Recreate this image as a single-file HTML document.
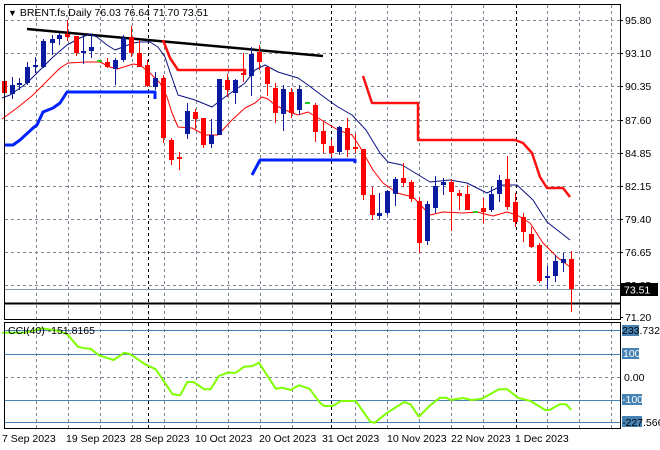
<!DOCTYPE html>
<html><head><meta charset="utf-8"><style>
body{margin:0;background:#fff;width:660px;height:450px;overflow:hidden;font-family:"Liberation Sans",sans-serif;}
svg{position:absolute;left:0;top:0}
text{font-family:"Liberation Sans",sans-serif;font-size:10.5px;fill:#000}
</style></head><body>
<svg id="s" width="660" height="450" viewBox="0 0 660 450">
<rect x="0" y="0" width="660" height="450" fill="#fff"/>
<g id="grid" stroke="#7a8591" stroke-width="1" stroke-dasharray="3,3" fill="none"></g>
<g id="lines" fill="none"></g>
<g id="candles"></g>
<rect x="4.5" y="4.5" width="616" height="315" fill="none" stroke="#000"/>
<rect x="4.5" y="322.5" width="616" height="106" fill="none" stroke="#000"/>
<text x="8" y="16"><tspan font-size="9">▼</tspan> BRENT.fs,Daily  76.03 76.64 71.70 73.51</text>
<g font-size="10.5">
<text x="625" y="24">95.80</text>
<text x="625" y="57">93.10</text>
<text x="625" y="90">90.35</text>
<text x="625" y="124">87.60</text>
<text x="625" y="157">84.85</text>
<text x="625" y="190">82.15</text>
<text x="625" y="223">79.40</text>
<text x="625" y="256">76.65</text>
<text x="625" y="289">73.85</text>
<text x="625" y="321">71.20</text>
</g>
<rect x="621" y="283" width="37" height="13" fill="#000"/>
<text x="624" y="293.5" style="fill:#fff">73.51</text>
<text x="8" y="334">CCI(40) -151.8165</text>
<rect x="622" y="325" width="17" height="11" fill="#4682b4"/>
<text x="622" y="334">233.7321</text>
<rect x="622" y="348" width="17" height="11" fill="#4682b4"/>
<text x="623" y="357" style="fill:#fff">100</text>
<text x="624" y="381">0.00</text>
<rect x="622" y="394" width="20" height="11" fill="#4682b4"/>
<text x="622" y="403" style="fill:#fff">-100</text>
<rect x="622" y="416" width="20" height="11" fill="#4682b4"/>
<text x="622" y="426">-227.566</text>
<g font-size="10.5">
<text x="2" y="442">7 Sep 2023</text>
<text x="66" y="442">19 Sep 2023</text>
<text x="130" y="442">28 Sep 2023</text>
<text x="195" y="442">10 Oct 2023</text>
<text x="259" y="442">20 Oct 2023</text>
<text x="322" y="442">31 Oct 2023</text>
<text x="387" y="442">10 Nov 2023</text>
<text x="451" y="442">22 Nov 2023</text>
<text x="515" y="442">1 Dec 2023</text>
</g>
</svg>
<script>
var NS="http://www.w3.org/2000/svg";
function el(p,t,a){var e=document.createElementNS(NS,t);for(var k in a)e.setAttribute(k,a[k]);p.appendChild(e);return e;}
var g=document.getElementById("grid");
[20,53,86,120,153,186,219,252,285].forEach(function(y){el(g,"line",{x1:5,x2:620,y1:y+.5,y2:y+.5});el(g,"line",{x1:620,x2:623,y1:y+.5,y2:y+.5,"stroke-dasharray":"none",stroke:"#000"});});
el(g,"line",{x1:620,x2:623,y1:317.5,y2:317.5,"stroke-dasharray":"none",stroke:"#000"});
el(g,"line",{x1:5,x2:620,y1:377.5,y2:377.5});
[36,68,100,132,164,196,228,260,292,355,387,419,451,483,547,579,611].forEach(function(x){el(g,"line",{x1:x+.5,x2:x+.5,y1:5,y2:319});el(g,"line",{x1:x+.5,x2:x+.5,y1:323,y2:428});});
[148,331,516].forEach(function(x){el(g,"line",{x1:x+.5,x2:x+.5,y1:5,y2:319,stroke:"#000"});el(g,"line",{x1:x+.5,x2:x+.5,y1:323,y2:428,stroke:"#000"});});
var L=document.getElementById("lines");
[330,354,400,422].forEach(function(y){el(L,"line",{x1:5,x2:620,y1:y+.5,y2:y+.5,stroke:"#4682b4"});});
el(L,"line",{x1:5,x2:620,y1:289.5,y2:289.5,stroke:"#8a98a8"});
el(L,"line",{x1:5,x2:620,y1:303.5,y2:303.5,stroke:"#000","stroke-width":2});
el(L,"line",{x1:27,x2:323,y1:29,y2:56,stroke:"#000","stroke-width":2.5});
function pl(pts,c,w){el(L,"polyline",{points:pts,stroke:c,"stroke-width":w,"stroke-linejoin":"round"});}
pl("2,98 10,95 27,83 43,67 53,57 67,45 80,38 90,34 97,37 107,45 115,50 123,47 133,43 140,42 150,42 158,47 165,57 170,72 178,95 195,100 212,107 225,97 245,83 255,70 265,65 278,72 298,78 308,85 328,100 338,107 352,115 366,130 380,153 388,162 402,165 430,182 450,180 467,183 487,193 503,185 517,185 533,200 547,222 570,240","#0a1080",1);
pl("2,119 17,108 33,95 50,78 60,68 68,63 87,62 100,62 110,67 117,69 127,66 133,64 140,65 150,73 160,83 167,97 172,113 178,127 192,128 205,135 218,135 232,120 245,108 255,103 262,97 268,99 275,105 285,110 298,115 308,112 318,118 328,124 338,130 352,135 360,147 373,170 383,183 397,193 413,197 430,215 443,212 463,213 477,212 493,216 507,212 517,215 530,223 543,243 557,257 570,267","#ff0000",1);
pl("4,145 13,145 20,140 33,128 37,125 43,112 53,108 60,103 67,92 155,92 155,99","#0022ff",3);
pl("252,175 260,160 355,160 355,163","#0022ff",3);
pl("163,40 170,58 178,70 245,70 245,75","#ff1010",2.5);
pl("363,76 372,103 418,103 418,140 515,140 523,143 532,153 540,177 547,188 563,188 570,197","#ff1010",2.5);
var C=[[4,81,93,78,96,'r'],[12,85,94,77,99,'b'],[19,83,84,78,90,'b'],[27,67,83,62,85,'b'],[35,65,67,57,73,'b'],[43,41,67,39,68,'b'],[52,39,43,35,55,'b'],[59,35,39,33,45,'b'],[67,34,37,20,41,'r'],[76,36,53,36,56,'r'],[83,51,53,35,64,'b'],[91,47,51,35,58,'b'],[99,60,61,60,61,'g'],[107,62,67,58,68,'r'],[115,60,69,58,85,'b'],[123,38,60,35,62,'b'],[131,37,53,26,57,'r'],[139,53,67,40,67,'r'],[147,65,86,60,87,'r'],[155,78,87,72,90,'b'],[163,78,138,75,143,'r'],[171,140,160,138,165,'r'],[179,157,158,152,170,'r'],[187,111,134,103,139,'b'],[195,112,119,109,129,'r'],[203,118,145,118,148,'r'],[211,135,144,119,148,'b'],[219,79,135,79,135,'b'],[227,80,90,74,97,'r'],[235,80,93,79,104,'b'],[243,73,75,53,82,'r'],[251,54,76,47,96,'b'],[259,52,62,45,70,'r'],[267,67,84,67,96,'r'],[275,88,113,83,123,'r'],[283,89,114,85,131,'b'],[291,92,113,88,118,'r'],[299,89,110,85,115,'b'],[307,102,103,102,103,'g'],[315,105,132,103,142,'r'],[323,131,144,122,153,'r'],[331,146,153,140,157,'r'],[339,127,152,126,155,'b'],[347,128,150,118,157,'r'],[355,147,149,134,153,'r'],[363,149,195,149,200,'r'],[372,195,215,187,220,'r'],[379,213,216,193,219,'b'],[387,191,213,190,215,'b'],[395,179,194,177,206,'b'],[403,178,183,163,187,'r'],[411,182,199,180,202,'r'],[419,201,243,197,253,'r'],[427,204,241,201,245,'b'],[435,186,208,176,213,'b'],[443,182,185,178,195,'b'],[451,182,192,179,231,'r'],[459,193,196,190,210,'r'],[467,194,210,185,210,'r'],[475,211,212,211,212,'g'],[483,208,212,198,223,'r'],[491,194,210,187,212,'b'],[499,180,194,175,202,'b'],[507,179,207,156,210,'r'],[515,202,222,193,227,'r'],[523,217,232,213,242,'r'],[531,234,247,227,248,'r'],[539,245,281,243,283,'r'],[547,276,278,266,289,'b'],[555,261,276,255,282,'b'],[563,259,263,253,272,'b'],[571,259,289,251,312,'r']];
var cg=document.getElementById("candles");
C.forEach(function(c){var col=c[5]=='r'?'#ff0000':(c[5]=='b'?'#0c1aa0':'#22cc22');
el(cg,"line",{x1:c[0]+.5,x2:c[0]+.5,y1:c[3],y2:c[4],stroke:col});
var h=Math.max(2,c[2]-c[1]);el(cg,"rect",{x:c[0]-2,y:c[1],width:5,height:h,fill:col});});
var Z=[[5,70],[60,70],[100,57],[140,65],[160,75],[185,112],[200,117],[215,118],[235,138],[270,152],[295,130],[310,135],[345,165],[370,180],[410,255],[428,258],[445,218],[460,218],[485,240],[500,240],[520,200],[540,190],[560,190],[580,172],[600,170],[615,160],[655,238],[670,235],[690,242],[710,228],[735,238],[760,280],[770,290],[790,290],[810,275],[845,275],[880,338],[890,340],[920,310],[960,278],[975,285],[995,322],[1020,290],[1045,265],[1060,265],[1070,272],[1100,266],[1120,272],[1145,268],[1185,240],[1205,240],[1230,265],[1260,275],[1295,302],[1305,302],[1330,285],[1345,285],[1357,302]];
pl(Z.map(function(p){return (p[0]*0.421).toFixed(1)+","+(330+(p[1]-62)/3).toFixed(1);}).join(" "),"#7fff00",2);
</script>
</body></html>
